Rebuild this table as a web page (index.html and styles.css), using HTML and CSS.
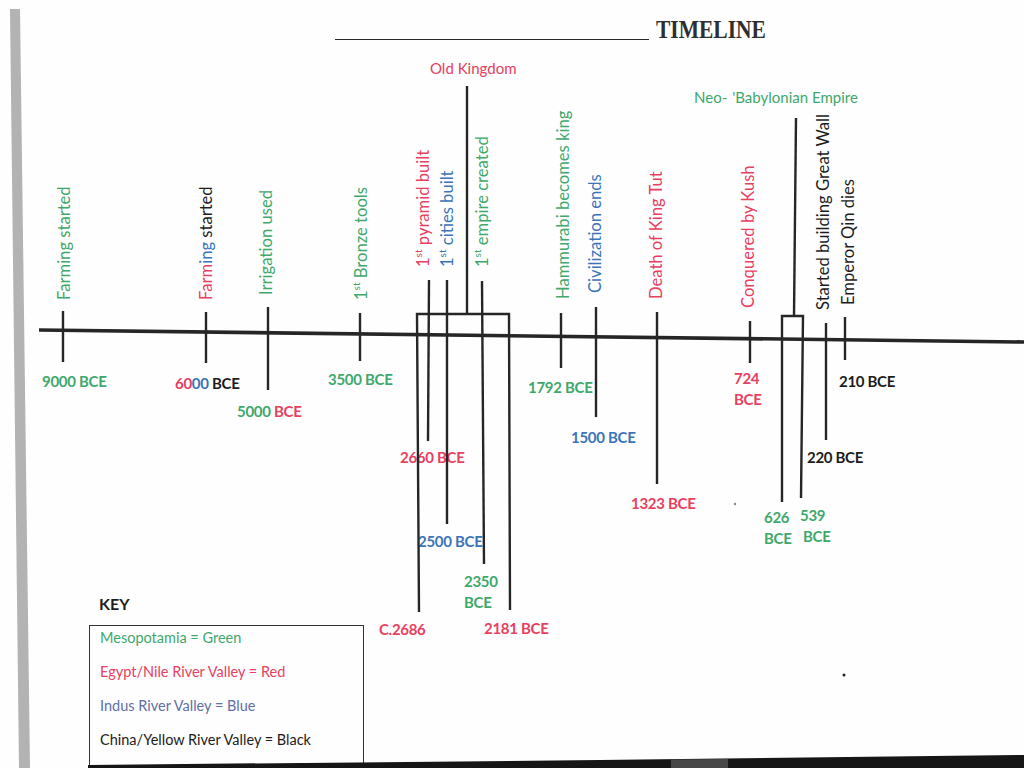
FILE: index.html
```html
<!DOCTYPE html>
<html lang="en">
<head>
<meta charset="utf-8">
<title>Timeline</title>
<link rel="stylesheet" href="styles.css">
</head>
<body>
<div class="page">
  <header class="title">
    <span class="rule"></span>
    <h1 class="title-text">TIMELINE</h1>
  </header>

  <div class="diagram">
    <!-- event labels (rotated) -->
    <div class="ev ev1 g">Farming started</div>
    <div class="ev ev2"><span class="r">Farm</span><span class="b">ing</span><span class="k"> started</span></div>
    <div class="ev ev3 g">Irrigation used</div>
    <div class="ev ev4 g">1<sup>st</sup> Bronze tools</div>
    <div class="ev ev5 r">1<sup>st</sup> pyramid built</div>
    <div class="ev ev6 b">1<sup>st</sup> cities built</div>
    <div class="ev ev7 g">1<sup>st</sup> empire created</div>
    <div class="ev ev8 g">Hammurabi becomes king</div>
    <div class="ev ev9 b">Civilization ends</div>
    <div class="ev ev10 r">Death of King Tut</div>
    <div class="ev ev11 r">Conquered by Kush</div>
    <div class="ev ev12 k">Started building Great Wall</div>
    <div class="ev ev13 k">Emperor Qin dies</div>

    <!-- period labels -->
    <div class="per per-old r">Old Kingdom</div>
    <div class="per per-neo g">Neo-<span class="gap"></span>'Babylonian Empire</div>

    <!-- dates -->
    <div class="d d9000 g">9000 BCE</div>
    <div class="d d6000"><span class="r">60</span><span class="b">00</span><span class="k"> BCE</span></div>
    <div class="d d5000"><span class="g">5000</span><span class="r"> BCE</span></div>
    <div class="d d3500 g">3500 BCE</div>
    <div class="d d2660 r">2660 BCE</div>
    <div class="d d2500 b">2500 BCE</div>
    <div class="d d2350 g two">2350<br>BCE</div>
    <div class="d d2686 r">C.2686</div>
    <div class="d d2181 r">2181 BCE</div>
    <div class="d d1792 g">1792 BCE</div>
    <div class="d d1500 b">1500 BCE</div>
    <div class="d d1323 r">1323 BCE</div>
    <div class="d d724 r two">724<br>BCE</div>
    <div class="d d626 g two">626<br>BCE</div>
    <div class="d d539 g two">539<br><span class="shift">BCE</span></div>
    <div class="d d220 k">220 BCE</div>
    <div class="d d210 k">210 BCE</div>

    <svg class="lines" width="1024" height="768" viewBox="0 0 1024 768">
      <polygon points="10,9 20,9 30,768 19,768" fill="#b3b3b3"/>
      <g stroke="#262626" stroke-width="2.4" fill="none" stroke-linecap="butt">
        <line x1="39" y1="330" x2="1024" y2="342" stroke-width="3.6"/>
        <path d="M63 311V362"/>
        <path d="M206 312V363"/>
        <path d="M268 307V390"/>
        <path d="M360 313V361"/>
        <polyline points="419,612 417,314 509,314 510,610"/>
        <path d="M467 86V314"/>
        <path d="M429 280L428 441"/>
        <path d="M447 280V524"/>
        <path d="M482 281L484 564"/>
        <path d="M561 313V368"/>
        <path d="M596 307V417"/>
        <path d="M657 312V484"/>
        <path d="M750 321V363"/>
        <polyline points="782,502 782,316 803,316 801,498"/>
        <path d="M796 118L794 316"/>
        <path d="M826 323V440"/>
        <path d="M845 317V360"/>
      </g>
      <circle cx="735" cy="504" r="1.2" fill="#888"/>
      <circle cx="844" cy="675" r="1.5" fill="#222"/>
      <polygon points="88,768 88,765 600,760 1024,755 1024,768" fill="#161616"/>
      <polygon points="671,759.5 728,759 728,768 671,768" fill="#474747"/>
    </svg>
  </div>

  <section class="key">
    <div class="key-head">KEY</div>
    <div class="key-box">
      <div class="key-row g">Mesopotamia = Green</div>
      <div class="key-row r">Egypt/Nile River Valley = Red</div>
      <div class="key-row kb">Indus River Valley = Blue</div>
      <div class="key-row k">China/Yellow River Valley = Black</div>
    </div>
  </section>
</div>
</body>
</html>
```

FILE: styles.css
```css
* { box-sizing: border-box; }
html, body { margin: 0; padding: 0; background: #fff; }
body { font-family: Lato, "Open Sans", sans-serif; color: #1e1e1e; }

.page {
  position: relative;
  width: 1024px;
  height: 768px;
  overflow: hidden;
  background: #fefefe;
  display: flex;
  flex-direction: column;
}

/* colours */
.g { color: #3fa86b; }
.r { color: #e8405f; }
.b { color: #3b74b9; }
.k { color: #1c1c1c; }
.kb { color: #5f6ea6; }

/* title */
.title {
  display: flex;
  align-items: flex-end;
  gap: 7px;
  height: 21px;
  margin: 22px 0 0 335px;
}
.rule {
  width: 314px;
  height: 0;
  border-top: 1.5px solid #2a2a2a;
  margin-bottom: 3px;
}
.title-text {
  margin: 0;
  font: bold 21.5px/21px "Liberation Serif", serif;
  color: #2e2e2e;
  transform: scaleY(1.22);
  transform-origin: 50% 100%;
}

/* diagram canvas */
.diagram {
  position: absolute;
  inset: 0;
}
.lines {
  position: absolute;
  left: 0;
  top: 0;
}

/* rotated event labels: left = centre x - 8.5, top = bottom of text */
.ev {
  position: absolute;
  font: 16.6px/17px Lato, sans-serif;
  white-space: nowrap;
  transform-origin: 0 0;
  transform: rotate(-90deg);
}
.ev sup { font-size: 10px; line-height: 0; vertical-align: 7px; }
.ev1 { left: 56px; top: 300px; }
.ev2 { left: 198px; top: 300px; }
.ev3 { left: 258px; top: 295px; }
.ev4 { left: 353px; top: 300px; }
.ev5 { left: 415px; top: 267px; }
.ev6 { left: 439px; top: 267px; }
.ev7 { left: 474px; top: 267px; }
.ev8 { left: 555px; top: 299px; }
.ev9 { left: 587px; top: 293px; }
.ev10 { left: 648px; top: 299px; }
.ev11 { left: 740px; top: 308px; }
.ev12 { left: 815px; top: 310px; }
.ev13 { left: 840px; top: 305px; }

/* period labels */
.per {
  position: absolute;
  font: 15px/18px Lato, sans-serif;
  white-space: nowrap;
}
.per-old { left: 430px; top: 59px; }
.per-neo { left: 694px; top: 88px; }
.gap { display: inline-block; width: 5px; }

/* date labels */
.d {
  position: absolute;
  font: bold 15px/18px Lato, sans-serif;
  letter-spacing: -0.3px;
  white-space: nowrap;
}
.d.two { line-height: 21px; }
.shift { display: inline-block; margin-left: 3px; }
.d9000 { left: 42px; top: 372px; }
.d6000 { left: 175px; top: 374px; }
.d5000 { left: 237px; top: 402px; }
.d3500 { left: 328px; top: 370px; }
.d2660 { left: 400px; top: 448px; }
.d2500 { left: 418px; top: 532px; }
.d2350 { left: 464px; top: 571px; line-height: 20px; }
.d2686 { left: 379px; top: 620px; }
.d2181 { left: 484px; top: 619px; }
.d1792 { left: 528px; top: 378px; }
.d1500 { left: 571px; top: 428px; }
.d1323 { left: 631px; top: 494px; }
.d724 { left: 734px; top: 368px; line-height: 23px; }
.d626 { left: 764px; top: 507px; }
.d539 { left: 800px; top: 505px; }
.d220 { left: 807px; top: 448px; }
.d210 { left: 839px; top: 372px; }

/* key */
.key {
  margin: auto 0 0 89px;
}
.key-head {
  font: bold 16px/20px Lato, sans-serif;
  color: #1e1e1e;
  padding-left: 10px;
  margin-bottom: 11px;
}
.key-box {
  width: 275px;
  height: 143px;
  border: 1.5px solid #333;
  border-bottom: none;
  padding: 2px 0 0 10px;
  display: flex;
  flex-direction: column;
  gap: 14px;
}
.key-row {
  font: 14.5px/20px Lato, sans-serif;
  white-space: nowrap;
}
```
